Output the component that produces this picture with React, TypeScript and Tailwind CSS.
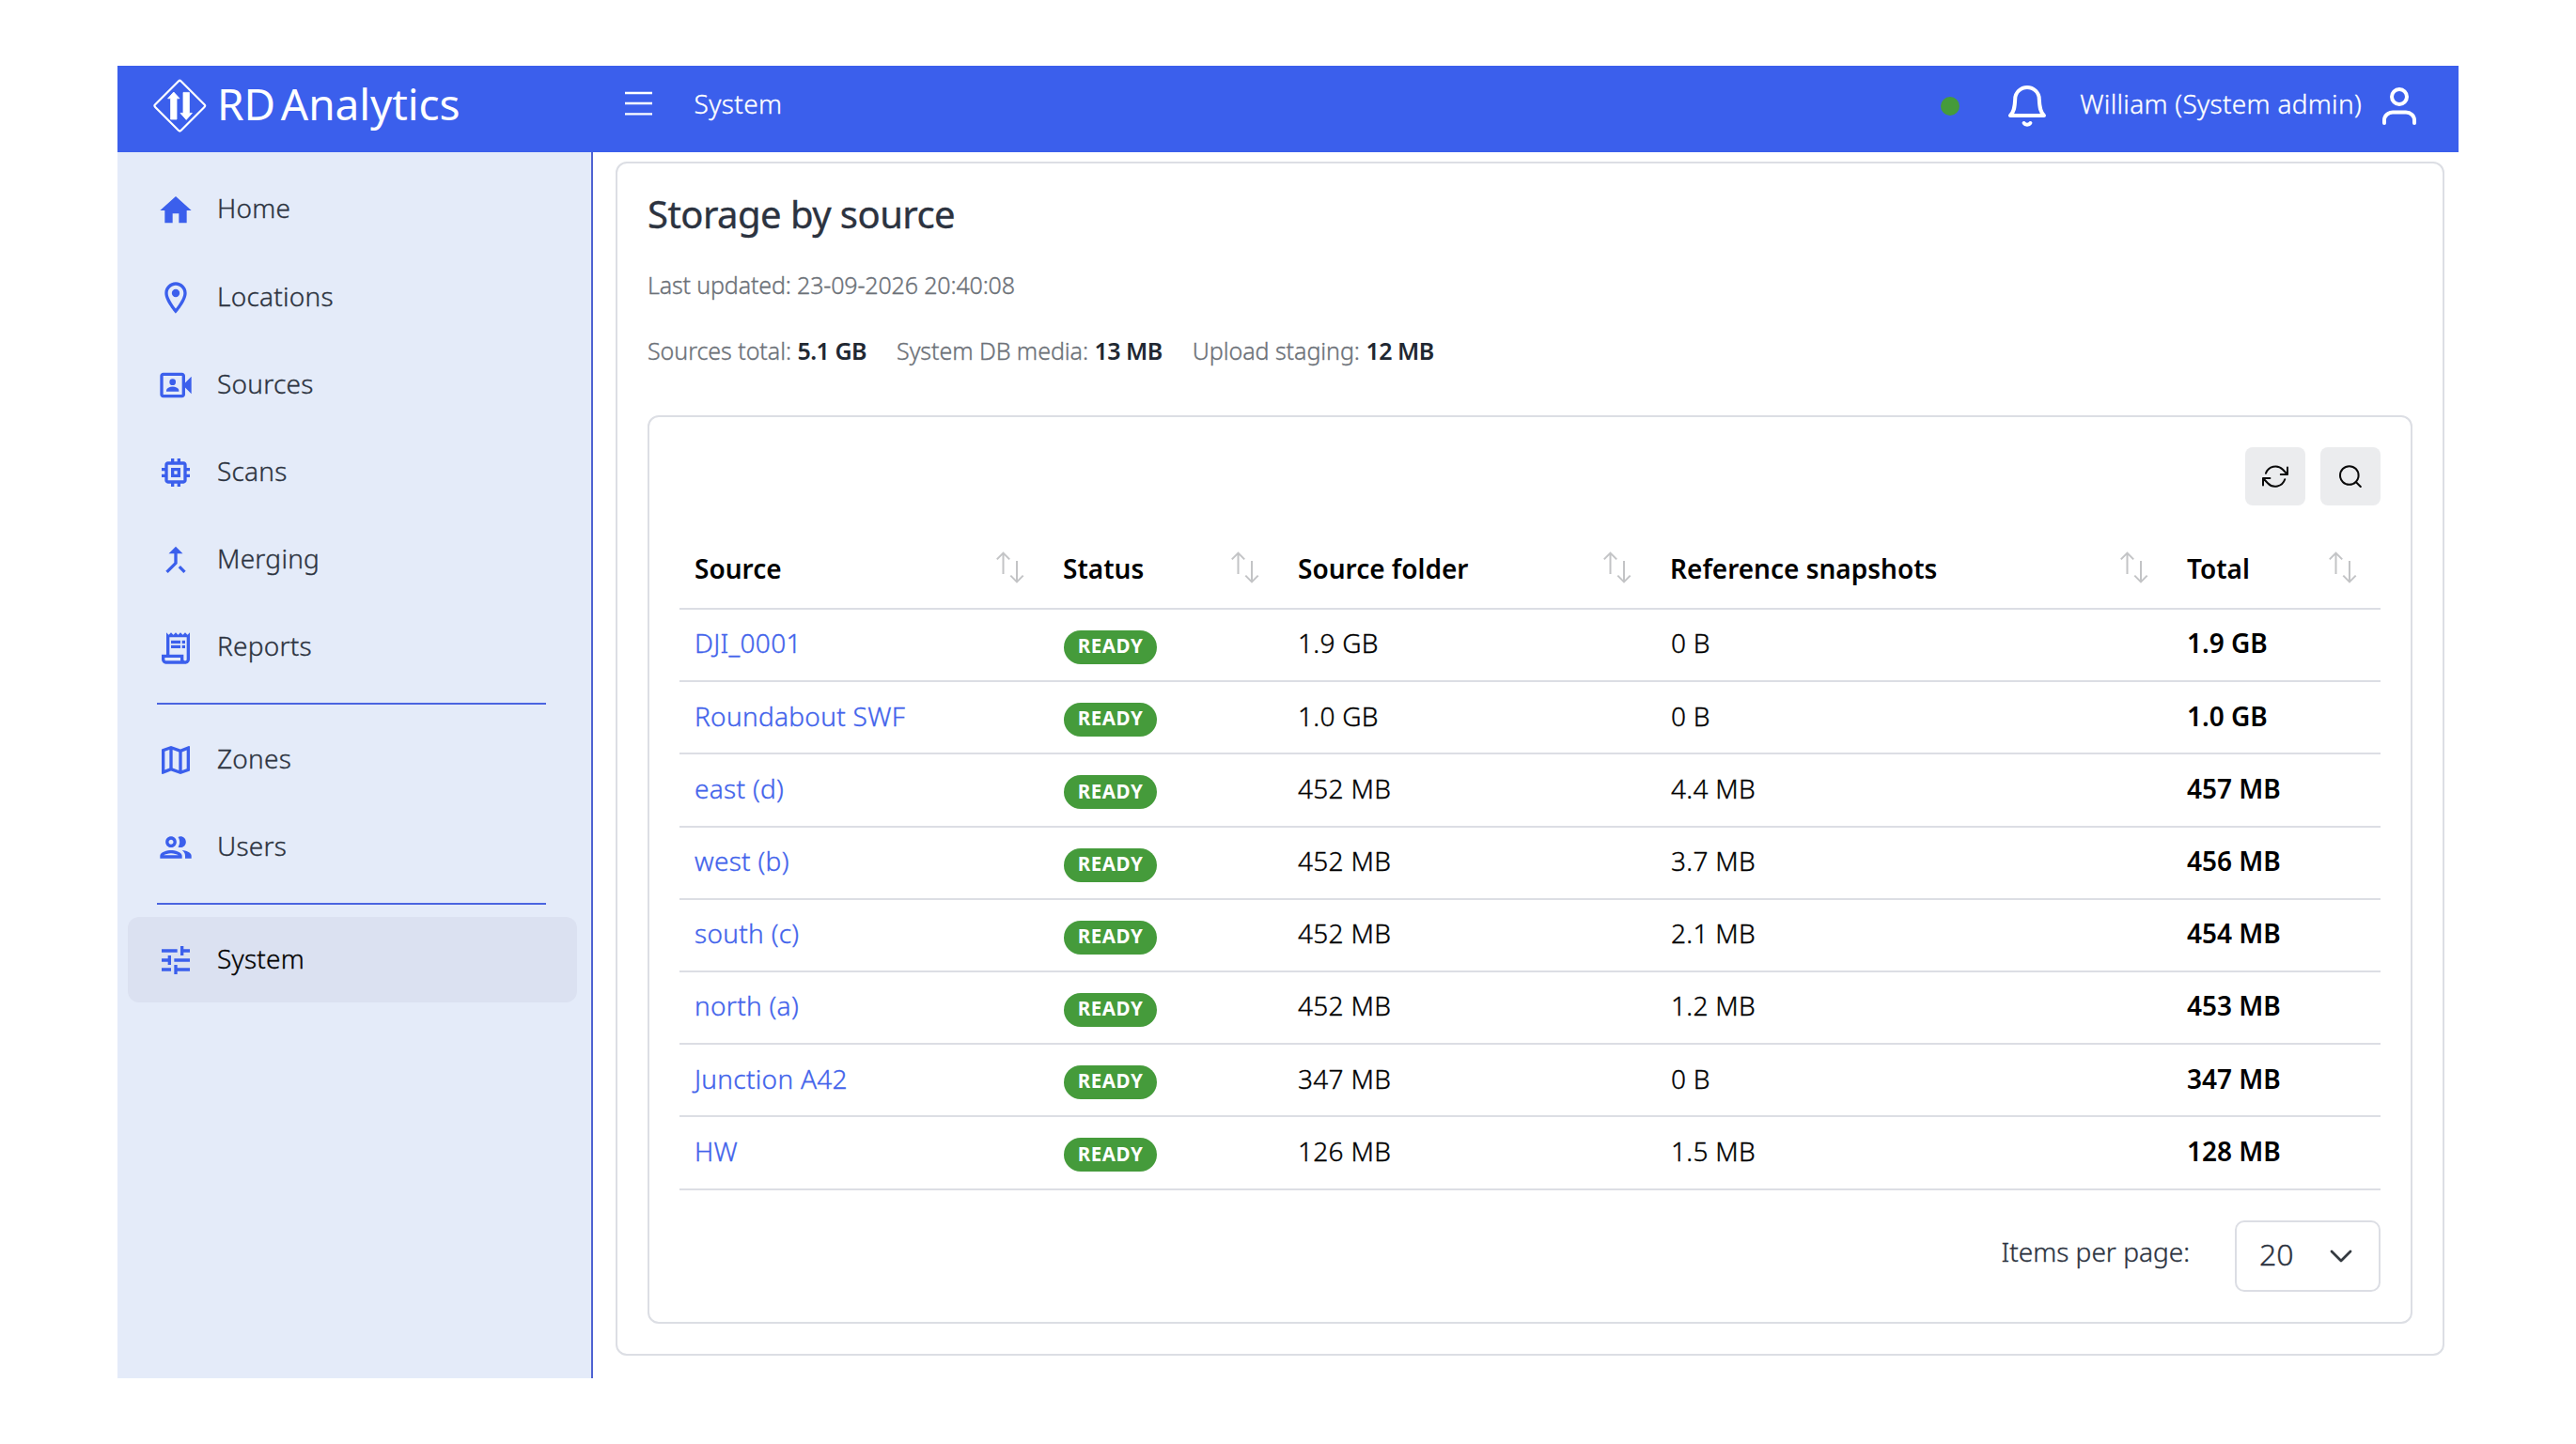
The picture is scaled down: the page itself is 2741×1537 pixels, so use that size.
import { IconType } from "react-icons"
import {
    MdCallMerge,
    MdHome,
    MdMemory,
    MdOutlineGroup,
    MdOutlineLocationOn,
    MdOutlineMap,
    MdOutlineReceiptLong,
    MdOutlineVideoCameraFront,
    MdTune,
} from "react-icons/md"

interface ISource {
    name: string,
    status: string,
    folder: string,
    snapshots: string,
    total: string,
}

interface IMenuItem {
    label: string,
    icon: IconType,
    active?: boolean,
}

const menuGroups: IMenuItem[][] = [
    [
        { label: 'Home', icon: MdHome },
        { label: 'Locations', icon: MdOutlineLocationOn },
        { label: 'Sources', icon: MdOutlineVideoCameraFront },
        { label: 'Scans', icon: MdMemory },
        { label: 'Merging', icon: MdCallMerge },
        { label: 'Reports', icon: MdOutlineReceiptLong },
    ],
    [
        { label: 'Zones', icon: MdOutlineMap },
        { label: 'Users', icon: MdOutlineGroup },
    ],
    [
        { label: 'System', icon: MdTune, active: true },
    ],
]

const sources: ISource[] = [
    { name: 'DJI_0001', status: 'READY', folder: '1.9 GB', snapshots: '0 B', total: '1.9 GB' },
    { name: 'Roundabout SWF', status: 'READY', folder: '1.0 GB', snapshots: '0 B', total: '1.0 GB' },
    { name: 'east (d)', status: 'READY', folder: '452 MB', snapshots: '4.4 MB', total: '457 MB' },
    { name: 'west (b)', status: 'READY', folder: '452 MB', snapshots: '3.7 MB', total: '456 MB' },
    { name: 'south (c)', status: 'READY', folder: '452 MB', snapshots: '2.1 MB', total: '454 MB' },
    { name: 'north (a)', status: 'READY', folder: '452 MB', snapshots: '1.2 MB', total: '453 MB' },
    { name: 'Junction A42', status: 'READY', folder: '347 MB', snapshots: '0 B', total: '347 MB' },
    { name: 'HW', status: 'READY', folder: '126 MB', snapshots: '1.5 MB', total: '128 MB' },
]

const columns = [
    { label: 'Source', width: 'w-[392px]' },
    { label: 'Status', width: 'w-[250px]' },
    { label: 'Source folder', width: 'w-[396px]' },
    { label: 'Reference snapshots', width: 'w-[550px]' },
    { label: 'Total', width: 'w-[222px]' },
]

const totals = [
    { label: 'Sources total:', value: '5.1 GB' },
    { label: 'System DB media:', value: '13 MB' },
    { label: 'Upload staging:', value: '12 MB' },
]

const Logo = () => (
    <svg width="59" height="58" viewBox="0 0 59 58" fill="none">
        <rect x="9.8" y="9.1" width="39" height="39" rx="2" transform="rotate(45 29.3 28.6)" stroke="white" strokeWidth="2.2" />
        <path d="M22.8 14 L29 20.8 H26 V43 H19.6 V20.8 H16.6 Z" fill="white" stroke="white" strokeWidth="0.8" strokeLinejoin="round" />
        <path d="M36.2 43.4 L42.4 36.4 H39.4 V14.4 H33 V36.4 H30 Z" fill="white" stroke="white" strokeWidth="0.8" strokeLinejoin="round" />
    </svg>
)

const BellIcon = () => (
    <svg width="40" height="44" viewBox="0 0 40 44" fill="none" stroke="white" strokeWidth="4" strokeLinecap="round" strokeLinejoin="round">
        <path d="M2 32 H38 C34.2 28.5 33.2 24 32.8 14.5 A12.8 12.5 0 0 0 7.2 14.5 C6.8 24 5.8 28.5 2 32 Z" />
        <path d="M16.6 40 A3.8 3 0 0 0 23.4 40" />
    </svg>
)

const UserIcon = () => (
    <svg width="36" height="40" viewBox="0 0 36 40" fill="none" stroke="white" strokeWidth="4" strokeLinecap="round">
        <circle cx="18" cy="10" r="8" />
        <path d="M2 38 V35 A9 8.5 0 0 1 11 26.5 H25 A9 8.5 0 0 1 34 35 V38" />
    </svg>
)

const SortIcon = () => (
    <svg width="30" height="34" viewBox="0 0 30 34" fill="none" stroke="#c3c4c6" strokeWidth="2">
        <path d="M7.5 24 V1.5 M0.8 8.4 L7.5 1.6 L14.2 8.4" />
        <path d="M22 10 V32.5 M15.3 25.6 L22 32.4 L28.7 25.6" />
    </svg>
)

const RefreshIcon = () => (
    <svg width="28" height="24" viewBox="0 0 28 24" fill="none" stroke="#0a0a0a" strokeWidth="2" strokeLinecap="round" strokeLinejoin="round">
        <path d="M4 8.8 A10.8 10.8 0 0 1 22 4.8 L27 10 M27 2.6 V10 H19.8" />
        <path d="M24.2 15.2 A10.8 10.8 0 0 1 6 19.2 L1 14 M1 21.4 V14 H8.4" />
    </svg>
)

const SearchIcon = () => (
    <svg width="24" height="24" viewBox="0 0 24 24" fill="none" stroke="#0a0a0a" strokeWidth="2" strokeLinecap="round">
        <circle cx="10.8" cy="11" r="9.8" />
        <path d="M17.8 18 L22.8 23" />
    </svg>
)

const Header = () => {
    return <header className="flex h-[92px] bg-[#3b5fec] text-white">
        <div className="flex w-[540px] h-[80px] items-center pl-[37px]">
            <div className="pt-1.5"><Logo /></div>
            <span className="ml-[10px] pt-0.5 text-[46px] font-normal tracking-[-0.1px] whitespace-nowrap [word-spacing:-6px] [-webkit-text-stroke:0]">RD Analytics</span>
        </div>
        <div className="flex h-[80px] flex-1 items-center">
            <svg width="29" height="26" viewBox="0 0 29 26" stroke="white" strokeWidth="2.4">
                <path d="M0 2 H29 M0 13 H29 M0 24.4 H29" />
            </svg>
            <span className="ml-[44.5px] tracking-[0.4px]">System</span>
        </div>
        <div className="flex h-[80px] items-center pr-[45px]">
            <span className="mt-1.5 size-5 rounded-full bg-[#459b3b]"></span>
            <span className="mt-1.5 ml-[52px]"><BellIcon /></span>
            <span className="ml-[36px] tracking-[0.3px] whitespace-nowrap">William (System admin)</span>
            <span className="mt-1.5 ml-[22px]"><UserIcon /></span>
        </div>
    </header>
}

const MenuLink = ({ item }: { item: IMenuItem }) => {
    const Icon = item.icon
    return <a className={`mb-[2px] ml-[10.5px] mr-[15.5px] flex h-[91.2px] items-center rounded-xl pl-[31.5px] ${item.active ? 'bg-[#dbe1f1] text-black' : 'text-[#2c3340]'}`}>
        <Icon className="size-10 text-[#3b5fec]" />
        <span className="mb-[4px] ml-[24px] tracking-[0.25px]">{item.label}</span>
    </a>
}

const Sidebar = () => {
    return <nav className="w-[506px] border-r-2 border-[#4f63d2] bg-[#e4ebf9] pt-4">
        {menuGroups.map((group, index) => <div key={index}>
            {index > 0 && <div className="mt-[13px] mb-[13.4px] ml-[42px] mr-[48px] h-[2px] bg-[#4a64e0]"></div>}
            {group.map(item => <MenuLink key={item.label} item={item} />)}
        </div>)}
    </nav>
}

const SourcesTable = () => {
    return <table className="mt-[21px] w-full table-fixed border-collapse text-left text-black">
        <thead>
            <tr className="h-[89px] border-b-2 border-[#dcdee4]">
                {columns.map(column => <th key={column.label} className={`${column.width} pl-4 pr-[25px] pt-0.5 font-semibold [-webkit-text-stroke:0]`}>
                    <div className="flex items-center justify-between whitespace-nowrap">
                        <span className="pt-0.5">{column.label}</span>
                        <SortIcon />
                    </div>
                </th>)}
            </tr>
        </thead>
        <tbody>
            {sources.map(source => <tr key={source.name} className="h-[77.2px] border-b-2 border-[#dcdee4] tracking-[0.3px]">
                <td className="pb-[4px] pl-4 text-[#4263eb]">{source.name}</td>
                <td className="pt-[5px] pl-[17px]">
                    <span className="flex h-9 w-[99px] items-center justify-center rounded-full bg-[#459b3b] pb-[3px] text-[20.5px] font-bold tracking-[0.6px] text-white [-webkit-text-stroke:0]">{source.status}</span>
                </td>
                <td className="pb-[4px] pl-4">{source.folder}</td>
                <td className="pb-[4px] pl-[17px]">{source.snapshots}</td>
                <td className="pb-[4px] pl-4 font-semibold tracking-normal [-webkit-text-stroke:0]">{source.total}</td>
            </tr>)}
        </tbody>
    </table>
}

const Pagination = () => {
    return <div className="mt-8 flex items-center justify-end text-[#2c3340]">
        <span className="mb-[8px]">Items per page:</span>
        <div className="ml-[48px] flex h-[76px] w-[155px] items-center justify-between rounded-[10px] border-2 border-[#dcdee4] pl-6 pr-[28px]">
            <span className="mb-[4px] text-[32px]">20</span>
            <svg width="24" height="14" viewBox="0 0 24 14" fill="none" stroke="#343a40" strokeWidth="2.8" strokeLinecap="round" strokeLinejoin="round">
                <path d="M2 2 L12 12 L22 2" />
            </svg>
        </div>
    </div>
}

const App = () => {
    return <div className="h-[1537px] w-[2741px] overflow-hidden bg-white px-[125px] pt-[70px] font-['Noto_Sans',sans-serif] text-[28px] leading-[1.3] font-light [-webkit-text-stroke:0.35px]">
        <div className="flex h-[1397px] flex-col">
            <Header />
            <div className="flex flex-1">
                <Sidebar />
                <main className="flex-1 pt-[10px] pl-6 pr-[15px]">
                    <section className="h-[1271px] rounded-xl border-2 border-[#dcdee4] px-8 pt-[26px]">
                        <h1 className="h-14 text-[40px] leading-[56px] font-normal tracking-[-0.55px] text-[#2c3340]">Storage by source</h1>
                        <p className="mt-[29px] h-9 text-[25px] leading-9 tracking-[-0.15px] text-[#6c7178]">Last updated: 23-09-2026 20:40:08</p>
                        <div className="mt-[34px] flex h-9 gap-[32px] text-[25px] leading-9 tracking-[-0.05px] text-[#6c7178]">
                            {totals.map(item => <span key={item.label}>{item.label} <b className="font-semibold tracking-[-0.5px] text-[#212832] [-webkit-text-stroke:0]">{item.value}</b></span>)}
                        </div>
                        <div className="mt-[51px] h-[967px] rounded-xl border-2 border-[#dcdee4] px-8 pt-8">
                            <div className="flex justify-end gap-4">
                                <button className="flex h-[62px] w-16 items-center justify-center rounded-lg bg-[#ebecee]"><RefreshIcon /></button>
                                <button className="flex h-[62px] w-16 items-center justify-center rounded-lg bg-[#ebecee]"><SearchIcon /></button>
                            </div>
                            <SourcesTable />
                            <Pagination />
                        </div>
                    </section>
                </main>
            </div>
        </div>
    </div>
}
export default App
